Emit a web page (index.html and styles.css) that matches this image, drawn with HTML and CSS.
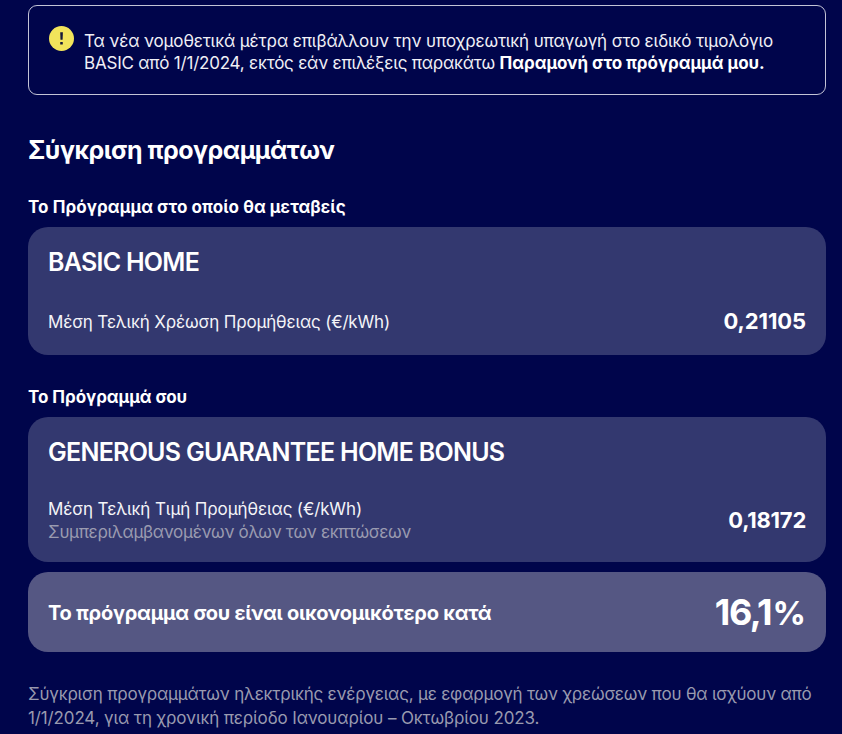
FILE: index.html
```html
<!DOCTYPE html>
<html lang="el">
<head>
<meta charset="utf-8">
<title>Σύγκριση προγραμμάτων</title>
<link rel="stylesheet" href="styles.css">
</head>
<body>
<main class="page">
  <section class="notice">
    <svg class="notice-icon" viewBox="0 0 25 25" aria-hidden="true"><circle cx="12.5" cy="12.5" r="12.5" fill="#f2e45b"/><path d="M11.2 6.2h2.7l-.3 7.6h-2.1z" fill="#15183a"/><rect x="11.2" y="16" width="2.6" height="2.6" rx=".5" fill="#15183a"/></svg>
    <p class="notice-text"><span class="line n1">Τα νέα νομοθετικά μέτρα επιβάλλουν την υποχρεωτική υπαγωγή στο ειδικό τιμολόγιο</span><span class="line"><span class="n2">BASIC από 1/1/2024, εκτός εάν επιλέξεις παρακάτω </span><b class="n3">Παραμονή στο πρόγραμμά μου.</b></span></p>
  </section>
  <h1 class="title">Σύγκριση προγραμμάτων</h1>
  <h2 class="label first">Το Πρόγραμμα στο οποίο θα μεταβείς</h2>
  <section class="card basic">
    <h3 class="name">BASIC HOME</h3>
    <div class="row"><span class="desc d1">Μέση Τελική Χρέωση Προμήθειας (€/kWh)</span><strong class="value v1">0,21105</strong></div>
  </section>
  <h2 class="label second">Το Πρόγραμμά σου</h2>
  <section class="card bonus">
    <h3 class="name">GENEROUS GUARANTEE HOME BONUS</h3>
    <div class="row"><div class="desc"><span class="line d2">Μέση Τελική Τιμή Προμήθειας (€/kWh)</span><span class="line muted">Συμπεριλαμβανομένων όλων των εκπτώσεων</span></div><strong class="value v2">0,18172</strong></div>
  </section>
  <section class="card saving"><span class="saving-text">Το πρόγραμμα σου είναι οικονομικότερο κατά</span><strong class="percent">16,1<span class="sign">%</span></strong></section>
  <p class="footnote"><span class="line f1">Σύγκριση προγραμμάτων ηλεκτρικής ενέργειας, με εφαρμογή των χρεώσεων που θα ισχύουν από</span><span class="line f2">1/1/2024, για τη χρονική περίοδο Ιανουαρίου – Οκτωβρίου 2023.</span></p>
</main>
</body>
</html>
```
FILE: styles.css
```css
* { box-sizing: border-box; }
body { margin: 0; background: #00054b; color: #fff; font-family: Inter, "Noto Sans", sans-serif; }
h1, h2, h3, p { margin: 0; }
.page { height: 734px; padding: 5px 16px 0 28px; overflow: hidden; }
.line { display: block; white-space: nowrap; }
.notice { height: 90px; border: 1px solid #c3c4d6; border-radius: 9px; display: flex; padding: 20px; gap: 10px; }
.notice-icon { width: 25px; height: 25px; flex: none; }
.notice-text { font-size: 17px; line-height: 22px; padding-top: 4px; color: #f0f0f6; }
.n1 { letter-spacing: -.135px; }
.n2 { letter-spacing: -.21px; }
.n3 { color: #fff; letter-spacing: -.04px; }
.title { font-size: 25px; line-height: 32px; margin-top: 39px; font-weight: 700; letter-spacing: -.5px; white-space: nowrap; }
.label { font-size: 17px; line-height: 24px; font-weight: 700; white-space: nowrap; }
.first { margin-top: 29px; letter-spacing: .07px; }
.second { margin-top: 30px; letter-spacing: -.05px; }
.card { background: #33386f; border-radius: 20px; padding: 0 20px; }
.basic { height: 128px; margin-top: 8px; padding-top: 19px; }
.bonus { height: 145px; margin-top: 8px; padding-top: 19px; }
.name { font-size: 25px; line-height: 32px; font-weight: 600; letter-spacing: -.73px; white-space: nowrap; }
.row { display: flex; align-items: center; justify-content: space-between; height: 46px; margin-top: 20px; }
.bonus .row { margin-top: 29px; }
.desc { font-size: 17px; line-height: 23px; padding-top: 1px; color: #f4f4f8; white-space: nowrap; }
.d1 { letter-spacing: -.17px; padding-top: 2px; }
.d2 { letter-spacing: -.12px; }
.value { font-size: 22px; line-height: 28px; font-weight: 700; }
.v1 { letter-spacing: -.1px; }
.v2 { letter-spacing: -.25px; }
.muted { color: #9a9bb0; letter-spacing: -.32px; }
.saving { height: 80px; margin-top: 10px; background: #555783; display: flex; align-items: center; justify-content: space-between; }
.saving-text { font-size: 20px; font-weight: 700; letter-spacing: -.25px; padding-top: 1px; white-space: nowrap; }
.percent { font-size: 36px; font-weight: 700; letter-spacing: -1.5px; }
.sign { font-size: 33px; letter-spacing: 0; margin-left: 1.5px; }
.footnote { margin-top: 30px; font-size: 17px; line-height: 24px; color: #999aaf; }
.f1 { letter-spacing: -.21px; }
.f2 { letter-spacing: -.13px; }
```
